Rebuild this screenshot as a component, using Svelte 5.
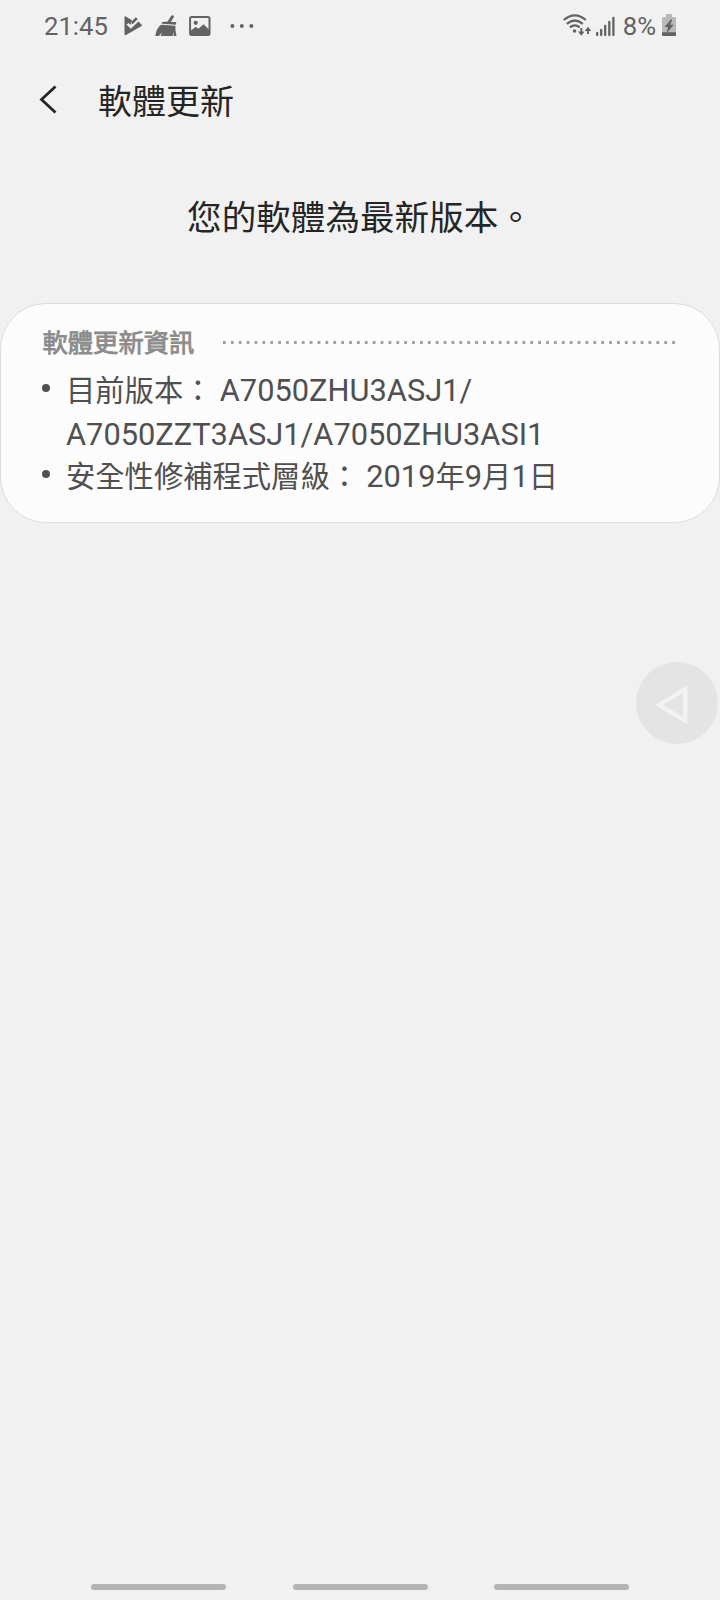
<script lang="ts">
	const title = '軟體更新';
	const status = '您的軟體為最新版本。';
	const dots = Array.from({ length: 58 }, (_, i) => i * 7.88);
	const navKeys = ['recents', 'home', 'back'];
</script>

<div class="screen" lang="zh-TW">
	<header class="status-bar">
		<div class="status-left">
			<span class="clock">21:45</span>
			<svg class="play" width="18" height="20" viewBox="0 0 18 20" fill="currentColor">
				<path d="M.5 1.2Q.5-.2 1.8.5L8 4.3 6.5 8.7 4.3 7 2.6 8.7 6.8 12.8 14.5 5.4 17.5 8.5Q18.2 9.5 17.2 10.2L2 19Q.5 19.8.5 18.2Z" />
				<path d="M7.2 5.9 11.8 1.2 13.8 3 8.3 8.4Z" />
			</svg>
			<svg class="broom" width="22" height="22" viewBox="0 0 22 22" fill="currentColor">
				<path d="M16.2.8Q17.5-.2 18.8.8 19.2 1.5 18.7 2.2L15.8 7H20.5Q21.4 7.2 21.2 8.3L20.8 9.8 6.7 8.8 7.2 7 12.7 6.6Z" />
				<path d="M6 9.7 20.4 10.7Q20.2 16.5 21.5 21H18.8L18.2 17 17.7 21H5.7L7.2 17.2 4 21H.4Q1 13.7 6 9.7Z" />
			</svg>
			<svg class="photo" width="22" height="20" viewBox="0 0 22 20">
				<rect x="1.1" y="1" width="19.4" height="18" rx="1.5" fill="none" stroke="currentColor" stroke-width="2" />
				<circle cx="6.7" cy="6.8" r="2.1" fill="currentColor" />
				<path d="M2 14.5 6.7 10.8 9.3 12.8 14.5 8.3 20 13.5V18.5H2Z" fill="currentColor" />
			</svg>
			<svg class="more" width="24" height="6" viewBox="0 0 24 6" fill="currentColor">
				<circle cx="2.4" cy="3" r="2" />
				<circle cx="11.8" cy="3" r="2" />
				<circle cx="21.4" cy="3" r="2" />
			</svg>
		</div>
		<div class="status-right">
			<svg class="wifi" width="28" height="24" viewBox="0 0 28 24" fill="none" stroke="currentColor" stroke-width="2.2">
				<path d="M.8 6Q11.8-3.2 22.8 6" />
				<path d="M3.8 9.8Q11.8 3.2 19.8 9.8" />
				<path d="M6.9 13.3Q11.8 9.3 16.7 13.3" />
				<circle cx="11.6" cy="17" r="1.8" fill="currentColor" stroke="none" />
				<path d="M18.3 14V20M25 20V15" stroke-width="1.9" />
				<path d="M15 17.5H21.6L18.3 21.8ZM21.7 17H28.3L25 12.7Z" fill="currentColor" stroke="none" />
			</svg>
			<svg class="signal" width="19" height="21" viewBox="0 0 19 21" stroke="currentColor" stroke-width="2.3" stroke-linecap="round">
				<path d="M1.2 17V19M5.2 13.8V19M9.2 10V19M13.3 6V19M17.4 1.8V19" />
			</svg>
			<span class="percent">8%</span>
			<svg class="battery" width="14" height="22" viewBox="0 0 14 22">
				<path d="M4 0H10V3H12.8Q14 3 14 4.2V22H0V4.2Q0 3 1.2 3H4Z" fill="#b9b9b9" />
				<path d="M0 18.2H14V20.8Q14 22 12.8 22H1.2Q0 22 0 20.8Z" fill="currentColor" />
				<path d="M9 5.3 2.6 13H6L4.6 19.5 11.6 10.8H8.2L10.2 5.8Z" fill="currentColor" />
			</svg>
		</div>
	</header>

	<div class="toolbar">
		<button class="back" aria-label="返回">
			<svg width="18" height="29" viewBox="0 0 18 29" fill="none" stroke="currentColor" stroke-width="2.8">
				<path d="M16.5 1.5 2.5 14.5 16.5 27.5" />
			</svg>
		</button>
		<h1>{title}</h1>
	</div>

	<p class="message">{status}</p>

	<section class="card">
		<div class="card-head">
			<h2>軟體更新資訊</h2>
			<svg class="dots" width="453" height="3" fill="#a0a0a0">
				{#each dots as x}
					<rect {x} y="0" width="2.8" height="3" />
				{/each}
			</svg>
		</div>
		<ul>
			<li class="version">
				目前版本： <span class="latin">A7050ZHU3ASJ1/<br />A7050ZZT3ASJ1/A7050ZHU3ASI1</span>
			</li>
			<li class="patch">
				安全性修補程式層級： <span class="latin">2019</span>年<span class="latin">9</span>月<span class="latin">1</span>日
			</li>
		</ul>
	</section>

	<button class="assist" aria-label="返回">
		<svg width="34" height="42" viewBox="0 0 34 42" fill="none" stroke="#f3f3f3" stroke-width="4.2">
			<path d="M30.2 5V36.5L4 21Z" />
		</svg>
	</button>

	<nav>
		{#each navKeys as key (key)}
			<span class="nav-key"></span>
		{/each}
	</nav>
</div>

<style>
	:global(body) {
		background: #f1f1f1;
	}

	.screen {
		position: relative;
		display: flex;
		flex-direction: column;
		width: 720px;
		height: 1600px;
		overflow: hidden;
		background: #f1f1f1;
		color: #252525;
		font-family: Roboto, 'Noto Sans CJK TC', sans-serif;
	}

	h1,
	h2,
	p,
	ul {
		margin: 0;
		padding: 0;
		font-weight: 400;
	}

	button {
		padding: 0;
		border: 0;
		background: none;
		color: inherit;
	}

	svg {
		display: block;
		flex: none;
	}

	.status-bar {
		display: flex;
		justify-content: space-between;
		height: 52px;
		padding: 0 44px 0 44px;
		box-sizing: border-box;
		color: #636363;
		font-size: 26px;
		line-height: 52px;
	}

	.status-left,
	.status-right {
		display: flex;
		align-items: center;
	}

	.clock {
		font-size: 25.7px;
	}

	.play {
		margin-left: 16px;
	}

	.broom {
		margin-left: 13px;
	}

	.photo {
		margin-left: 12px;
	}

	.more {
		margin: -1px 0 0 19px;
	}

	.signal {
		margin-left: 5px;
	}

	.percent {
		margin-left: 8px;
		font-size: 25.7px;
	}

	.battery {
		margin: -2px 0 0 6px;
	}

	.toolbar {
		display: flex;
		align-items: center;
		height: 96px;
		padding-left: 39px;
	}

	.back {
		margin: -1px 41px 0 0;
	}

	h1 {
		padding-top: 4px;
		font-size: 34px;
		line-height: 50px;
	}

	.message {
		height: 155px;
		font-size: 34.6px;
		line-height: 141px;
		text-align: center;
	}

	.card {
		height: 220px;
		padding: 24px 43px 0 41px;
		box-sizing: border-box;
		border: 1px solid #dcdcdc;
		border-radius: 46px;
		background: #fcfcfc;
	}

	.card-head {
		display: flex;
		justify-content: space-between;
		height: 32px;
		color: #8b8b8b;
	}

	/* regular weight thickened, softer than the real bold */
	h2 {
		padding: 0 0 0 0.5px;
		font-size: 25.3px;
		line-height: 32px;
		-webkit-text-stroke: 0.8px currentColor;
	}

	.dots {
		margin-top: 13px;
	}

	ul {
		margin-top: 9px;
		list-style: none;
		color: #505050;
		font-size: 29.3px;
	}

	li {
		position: relative;
		padding-left: 24px;
		line-height: 43px;
		white-space: nowrap;
	}

	.patch {
		margin-top: -2px;
	}

	li::before {
		content: '';
		position: absolute;
		top: 15px;
		left: 0;
		width: 8px;
		height: 8px;
		border-radius: 50%;
		background: #505050;
	}

	.latin {
		font-size: 30.8px;
	}

	.assist {
		position: absolute;
		top: 662px;
		left: 636px;
		width: 82px;
		height: 82px;
		padding: 3px 0 0 19px;
		border-radius: 50%;
		background: #e4e4e4;
	}

	nav {
		display: flex;
		justify-content: space-between;
		margin-top: auto;
		padding: 0 91px 10px;
	}

	.nav-key {
		width: 135px;
		height: 6px;
		border-radius: 3px;
		background: #b4b4b4;
	}
</style>
